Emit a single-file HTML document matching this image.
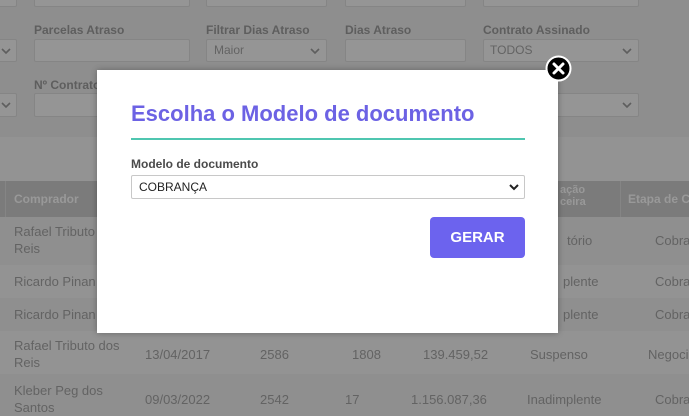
<!DOCTYPE html>
<html><head><meta charset="utf-8"><style>
*{box-sizing:border-box;margin:0;padding:0}
body{width:689px;height:416px;overflow:hidden;position:relative;background:#8e8e8e;font-family:"Liberation Sans",sans-serif}
.a{position:absolute}
.inp{position:absolute;background:#959595;border:1px solid #858585;border-radius:2px}
.lbl{position:absolute;font-size:12px;color:#5e5e5e;font-weight:bold}
.chev{position:absolute}
.band{position:absolute;left:0;top:137px;width:689px;height:44px;background:#939393}
.hdr{position:absolute;left:0;top:181px;width:689px;height:36px;background:#7b7b7b}
.row{position:absolute;left:0;width:689px}
.t{position:absolute;font-size:13px;color:#636363;line-height:17px;white-space:nowrap}
.h{position:absolute;font-size:12px;color:#999;font-weight:bold;white-space:nowrap}
</style></head><body>
<div class="inp" style="left:-5px;top:-5px;width:22px;height:12px"></div>
<div class="inp" style="left:34px;top:-5px;width:156px;height:12px"></div>
<div class="inp" style="left:206px;top:-5px;width:121px;height:12px"></div>
<div class="inp" style="left:345px;top:-5px;width:121px;height:12px"></div>
<div class="inp" style="left:483px;top:-5px;width:156px;height:12px"></div>

<div class="lbl" style="left:34px;top:23px">Parcelas Atraso</div>
<div class="lbl" style="left:206px;top:23px">Filtrar Dias Atraso</div>
<div class="lbl" style="left:345px;top:23px">Dias Atraso</div>
<div class="lbl" style="left:483px;top:23px">Contrato Assinado</div>
<div class="inp" style="left:-5px;top:39px;width:22px;height:23px"></div>
<svg class="chev" style="left:0px;top:46px" width="12" height="10"><path d="M2 3 L6 7 L10 3" stroke="#5e5e5e" stroke-width="1.6" fill="none"/></svg>
<div class="inp" style="left:34px;top:39px;width:156px;height:23px"></div>
<div class="inp" style="left:206px;top:39px;width:121px;height:23px"></div>
<div class="t" style="left:214px;top:42px;font-size:12px">Maior</div>
<svg class="chev" style="left:309px;top:46px" width="12" height="10"><path d="M2 3 L6 7 L10 3" stroke="#5e5e5e" stroke-width="1.6" fill="none"/></svg>
<div class="inp" style="left:345px;top:39px;width:121px;height:23px"></div>
<div class="inp" style="left:483px;top:39px;width:156px;height:23px"></div>
<div class="t" style="left:490px;top:42px;font-size:12px">TODOS</div>
<svg class="chev" style="left:621px;top:46px" width="12" height="10"><path d="M2 3 L6 7 L10 3" stroke="#5e5e5e" stroke-width="1.6" fill="none"/></svg>

<div class="lbl" style="left:34px;top:78px">Nº Contrato</div>
<div class="inp" style="left:-5px;top:93px;width:22px;height:24px"></div>
<svg class="chev" style="left:0px;top:100px" width="12" height="10"><path d="M2 3 L6 7 L10 3" stroke="#5e5e5e" stroke-width="1.6" fill="none"/></svg>
<div class="inp" style="left:34px;top:93px;width:156px;height:24px"></div>
<div class="inp" style="left:483px;top:93px;width:156px;height:24px"></div>
<svg class="chev" style="left:621px;top:100px" width="12" height="10"><path d="M2 3 L6 7 L10 3" stroke="#5e5e5e" stroke-width="1.6" fill="none"/></svg>

<div class="band"></div>
<div class="hdr"></div>
<div class="a" style="left:5px;top:181px;width:1px;height:235px;background:#858585"></div>
<div class="a" style="left:620px;top:181px;width:1px;height:235px;background:#858585"></div>
<div class="h" style="left:14px;top:192px">Comprador</div>
<div class="h" style="left:628px;top:192px">Etapa de C</div>
<div class="h" style="left:560px;top:184px;font-size:11px">ação<br>ceira</div>

<div class="row" style="top:217px;height:48px;background:#8f8f8f"></div>
<div class="row" style="top:265px;height:33px;background:#939393"></div>
<div class="row" style="top:298px;height:33px;background:#8f8f8f"></div>
<div class="row" style="top:331px;height:43px;background:#939393"></div>
<div class="row" style="top:374px;height:42px;background:#8f8f8f"></div>

<div class="t" style="left:14px;top:223px">Rafael Tributo<br>Reis</div>
<div class="t" style="left:567px;top:232px">tório</div><div class="t" style="left:655px;top:232px">Cobra</div>
<div class="t" style="left:14px;top:273px">Ricardo Pinan</div>
<div class="t" style="left:563px;top:273px">plente</div><div class="t" style="left:655px;top:273px">Cobra</div>
<div class="t" style="left:14px;top:306px">Ricardo Pinan</div>
<div class="t" style="left:563px;top:306px">plente</div><div class="t" style="left:655px;top:306px">Cobra</div>
<div class="t" style="left:14px;top:337px">Rafael Tributo dos<br>Reis</div>
<div class="t" style="left:145px;top:346px">13/04/2017</div><div class="t" style="left:260px;top:346px">2586</div><div class="t" style="left:352px;top:346px">1808</div><div class="t" style="left:423px;top:346px">139.459,52</div><div class="t" style="left:530px;top:346px">Suspenso</div><div class="t" style="left:648px;top:346px">Negoci</div>
<div class="t" style="left:14px;top:382px">Kleber Peg dos<br>Santos</div>
<div class="t" style="left:145px;top:391px">09/03/2022</div><div class="t" style="left:260px;top:391px">2542</div><div class="t" style="left:345px;top:391px">17</div><div class="t" style="left:411px;top:391px">1.156.087,36</div><div class="t" style="left:527px;top:391px">Inadimplente</div><div class="t" style="left:655px;top:391px">Cobra</div>

<div class="a" style="left:97px;top:70px;width:461px;height:263px;background:#fff;box-shadow:0 0 6px rgba(0,0,0,.3)"></div>
<div class="a" style="left:131px;top:101px;font-size:22px;font-weight:bold;color:#6c62e4">Escolha o Modelo de documento</div>
<div class="a" style="left:131px;top:138px;width:394px;height:2px;background:#4fc6b0"></div>
<div class="a" style="left:131px;top:157px;font-size:12px;font-weight:bold;color:#4a4a4a">Modelo de documento</div>
<div class="a" style="left:131px;top:175px;width:394px;height:24px;border:1px solid #c8c8c8;border-radius:2px"></div>
<div class="a" style="left:139px;top:180px;font-size:12px;color:#222">COBRANÇA</div>
<svg class="a" style="left:508px;top:182px" width="12" height="10"><path d="M2 3 L6 7 L10 3" stroke="#222" stroke-width="2" fill="none"/></svg>
<div class="a" style="left:430px;top:217px;width:95px;height:41px;background:#6c63ee;border-radius:4px;color:#fff;font-weight:bold;font-size:15px;text-align:center;line-height:41px">GERAR</div>
<svg class="a" style="left:545px;top:55px" width="27" height="27"><circle cx="13.5" cy="13.5" r="12" fill="#000" stroke="#fff" stroke-width="2"/><path d="M9 9 L18 18 M18 9 L9 18" stroke="#fff" stroke-width="3" stroke-linecap="round"/></svg>
</body></html>
